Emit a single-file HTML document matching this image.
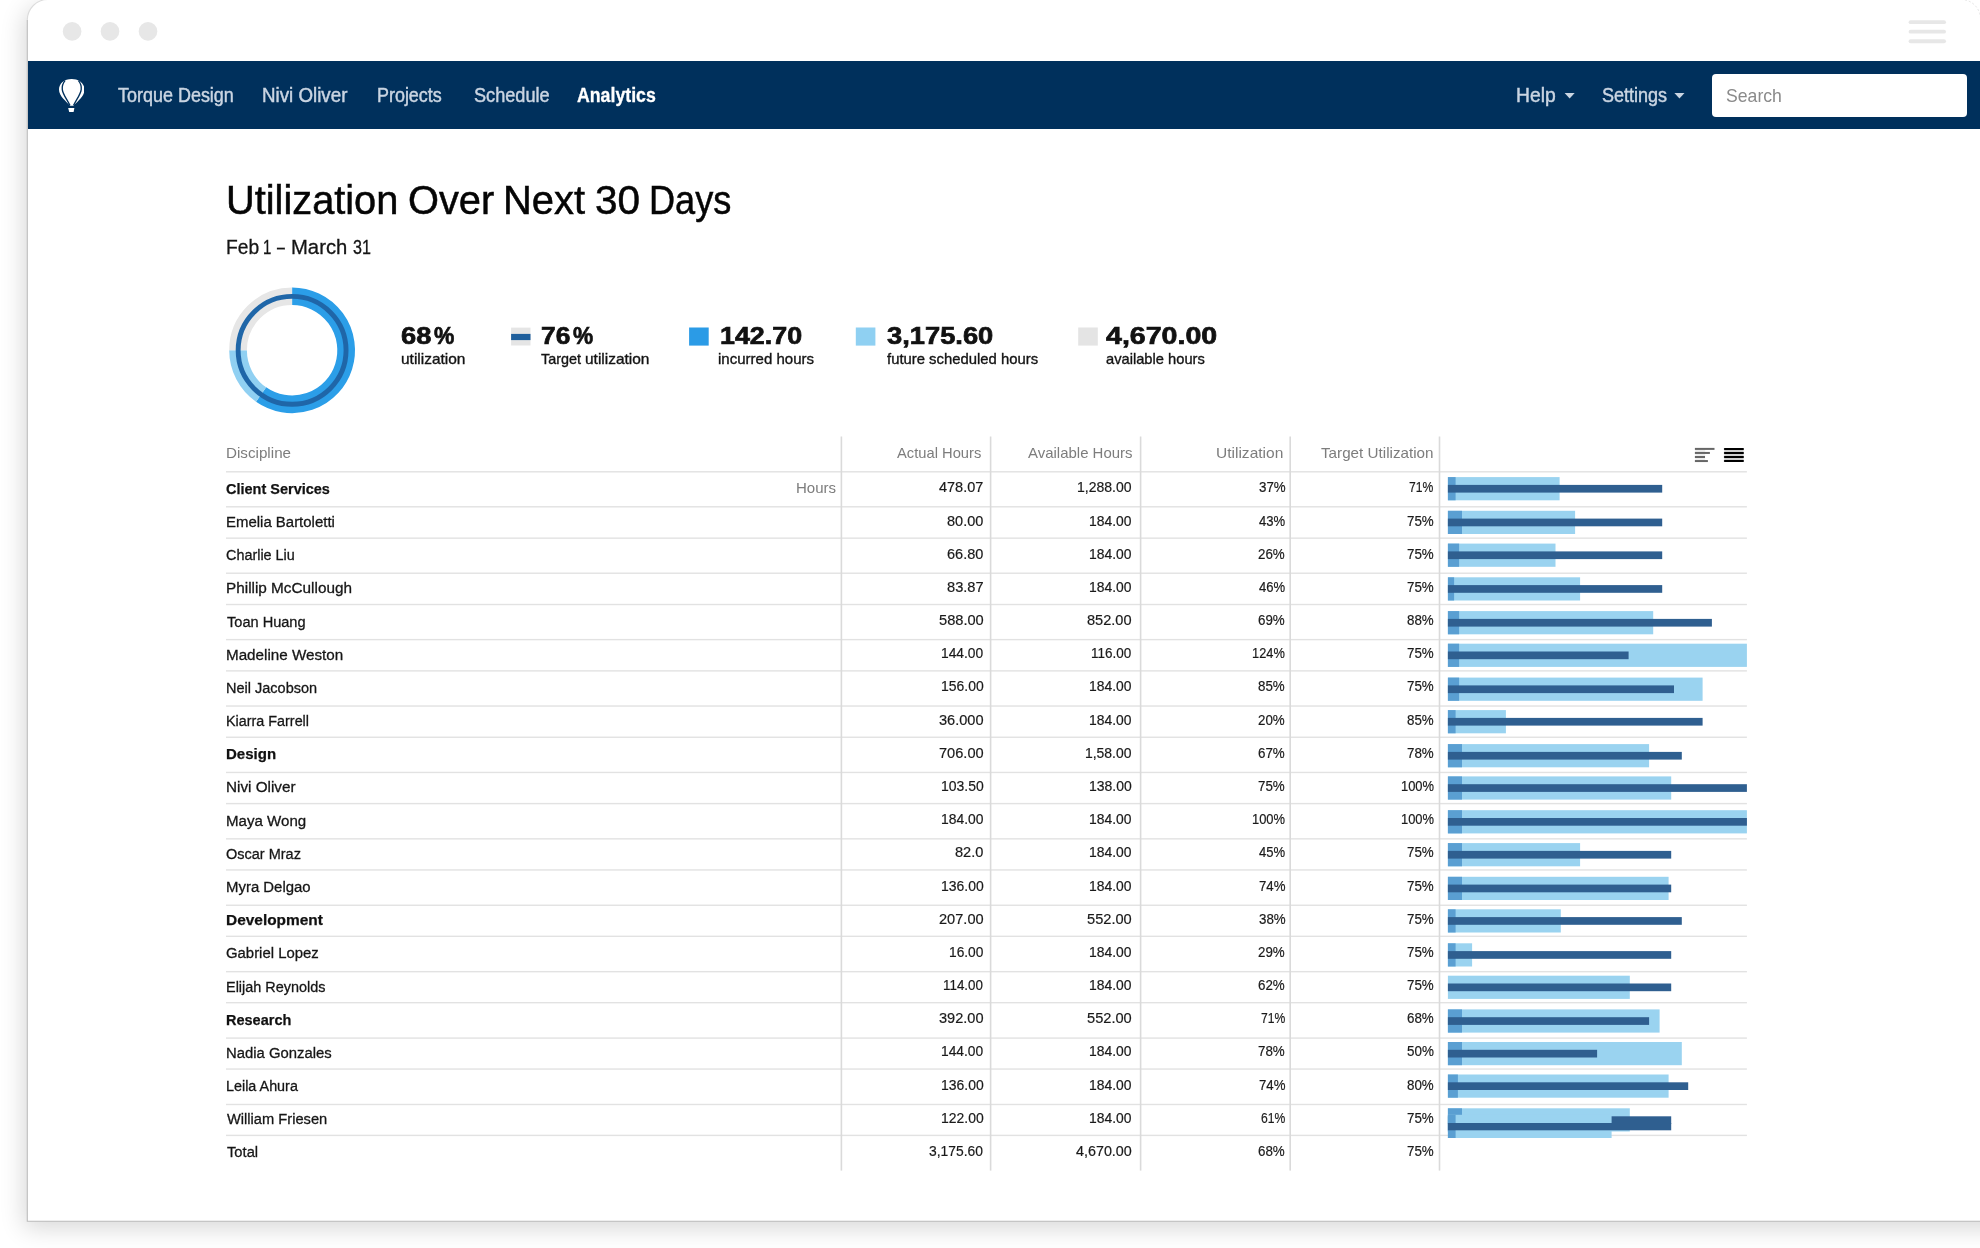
<!DOCTYPE html>
<html><head><meta charset="utf-8"><title>Utilization</title>
<style>
html,body{margin:0;padding:0}
body{width:1980px;height:1248px;position:relative;overflow:hidden;background:#fff;font-family:"Liberation Sans", sans-serif}
.b{position:absolute;display:block}
.t{position:absolute;white-space:nowrap;line-height:1;transform-origin:0 0;display:block}
#win{position:absolute;left:26.8px;top:-1px;width:1990px;height:1222.3px;border-radius:21px 0 0 0;background:#fff;box-shadow:-3px 7px 24px rgba(0,0,0,.16);overflow:hidden}
#txt{position:absolute;left:0;top:0;width:1980px;height:1248px;will-change:transform}
#nav{position:absolute;left:1px;top:62.2px;width:100%;height:67.6px;background:#00305c}
#search{position:absolute;left:1711.8px;top:73.6px;width:255.2px;height:43.5px;background:#fff;border-radius:4px}
</style></head>
<body>
<div id="win"><div id="nav"></div></div>
<div id="search"></div>
<svg class="b" style="left:58.6px;top:79px" width="25.5" height="33" viewBox="0 0 25.5 33">
<path d="M12.75 0C5.2 0 0 4.6 0 10.6C0 17.4 7.2 22.3 11 26.7L14.5 26.7C18.3 22.3 25.5 17.4 25.5 10.6C25.5 4.6 20.3 0 12.75 0Z" fill="#fff"/>
<path d="M6 1.6C3.6 4.6 2.9 7.6 3.3 10.6C3.9 15.6 8.2 20.6 10.9 26.4" fill="none" stroke="#00305c" stroke-width="1.35"/>
<path d="M19.5 1.6C21.9 4.6 22.6 7.6 22.2 10.6C21.6 15.6 17.3 20.6 14.6 26.4" fill="none" stroke="#00305c" stroke-width="1.35"/>
<path d="M9.2 29.1H15.4L14.6 32.9H10.2Z" fill="#fff"/>
</svg>
<svg class="b" style="left:0;top:0" width="1980" height="1248" viewBox="0 0 1980 1248">
<g fill="none" stroke-width="17.70">
<path d="M292.10 296.25A54.05 54.05 0 1 1 261.10 394.58" stroke="#2b9ee8"/>
<path d="M261.10 394.58A54.05 54.05 0 0 1 238.05 350.30" stroke="#90d0f2"/>
<path d="M238.05 350.30A54.05 54.05 0 0 1 292.10 296.25" stroke="#e6e6e6"/>
</g>
<circle cx="292.1" cy="350.3" r="53.95" fill="none" stroke="#1f66a8" stroke-width="4.9"/>
<path d="M27.3 20V1221.3H1981" fill="none" stroke="#bcbcbc" stroke-width="1.1"/>
<path d="M27.3 20A20.5 20.5 0 0 1 47.8 -0.5" fill="none" stroke="#dcdcdc" stroke-width="1.1"/>
<path d="M1961 -0.5A19.5 19.5 0 0 1 1980.5 19" fill="none" stroke="#e4e4e4" stroke-width="1" stroke-dasharray="2 2"/>
<rect x="226.00" y="471.10" width="1520.90" height="1.40" fill="#e2e2e2"/>
<rect x="226.00" y="506.10" width="1520.90" height="1.40" fill="#e2e2e2"/>
<rect x="226.00" y="537.46" width="1520.90" height="1.40" fill="#e2e2e2"/>
<rect x="226.00" y="572.51" width="1520.90" height="1.40" fill="#e2e2e2"/>
<rect x="226.00" y="603.82" width="1520.90" height="1.40" fill="#e2e2e2"/>
<rect x="226.00" y="638.92" width="1520.90" height="1.40" fill="#e2e2e2"/>
<rect x="226.00" y="670.18" width="1520.90" height="1.40" fill="#e2e2e2"/>
<rect x="226.00" y="705.33" width="1520.90" height="1.40" fill="#e2e2e2"/>
<rect x="226.00" y="736.54" width="1520.90" height="1.40" fill="#e2e2e2"/>
<rect x="226.00" y="771.74" width="1520.90" height="1.40" fill="#e2e2e2"/>
<rect x="226.00" y="802.90" width="1520.90" height="1.40" fill="#e2e2e2"/>
<rect x="226.00" y="838.15" width="1520.90" height="1.40" fill="#e2e2e2"/>
<rect x="226.00" y="869.26" width="1520.90" height="1.40" fill="#e2e2e2"/>
<rect x="226.00" y="904.56" width="1520.90" height="1.40" fill="#e2e2e2"/>
<rect x="226.00" y="935.62" width="1520.90" height="1.40" fill="#e2e2e2"/>
<rect x="226.00" y="970.97" width="1520.90" height="1.40" fill="#e2e2e2"/>
<rect x="226.00" y="1001.98" width="1520.90" height="1.40" fill="#e2e2e2"/>
<rect x="226.00" y="1037.38" width="1520.90" height="1.40" fill="#e2e2e2"/>
<rect x="226.00" y="1068.34" width="1520.90" height="1.40" fill="#e2e2e2"/>
<rect x="226.00" y="1103.79" width="1520.90" height="1.40" fill="#e2e2e2"/>
<rect x="226.00" y="1134.70" width="1520.90" height="1.40" fill="#e2e2e2"/>
<rect x="840.60" y="436.50" width="1.60" height="734.10" fill="#dadada"/>
<rect x="989.80" y="436.50" width="1.60" height="734.10" fill="#dadada"/>
<rect x="1139.80" y="436.50" width="1.60" height="734.10" fill="#dadada"/>
<rect x="1289.40" y="436.50" width="1.60" height="734.10" fill="#dadada"/>
<rect x="1438.70" y="436.50" width="1.60" height="734.10" fill="#dadada"/>
<rect x="1447.90" y="477.10" width="111.70" height="23.20" fill="#9ad3f0"/>
<rect x="1447.90" y="477.10" width="7.70" height="23.20" fill="#5a9fd2"/>
<rect x="1447.90" y="484.90" width="214.30" height="7.70" fill="#2f5f90"/>
<rect x="1447.90" y="510.80" width="127.20" height="23.20" fill="#9ad3f0"/>
<rect x="1447.90" y="510.80" width="14.10" height="23.20" fill="#5a9fd2"/>
<rect x="1447.90" y="518.60" width="214.30" height="7.70" fill="#2f5f90"/>
<rect x="1447.90" y="543.60" width="107.60" height="23.20" fill="#9ad3f0"/>
<rect x="1447.90" y="543.60" width="11.20" height="23.20" fill="#5a9fd2"/>
<rect x="1447.90" y="551.40" width="214.30" height="7.70" fill="#2f5f90"/>
<rect x="1447.90" y="577.30" width="132.20" height="23.20" fill="#9ad3f0"/>
<rect x="1447.90" y="577.30" width="6.20" height="23.20" fill="#5a9fd2"/>
<rect x="1447.90" y="585.10" width="214.30" height="7.70" fill="#2f5f90"/>
<rect x="1447.90" y="611.10" width="205.30" height="23.20" fill="#9ad3f0"/>
<rect x="1447.90" y="611.10" width="11.20" height="23.20" fill="#5a9fd2"/>
<rect x="1447.90" y="618.90" width="264.00" height="7.70" fill="#2f5f90"/>
<rect x="1447.90" y="643.70" width="299.00" height="23.20" fill="#9ad3f0"/>
<rect x="1447.90" y="643.70" width="11.20" height="23.20" fill="#5a9fd2"/>
<rect x="1447.90" y="651.50" width="180.70" height="7.70" fill="#2f5f90"/>
<rect x="1447.90" y="677.60" width="254.70" height="23.20" fill="#9ad3f0"/>
<rect x="1447.90" y="677.60" width="11.20" height="23.20" fill="#5a9fd2"/>
<rect x="1447.90" y="685.40" width="226.10" height="7.70" fill="#2f5f90"/>
<rect x="1447.90" y="710.10" width="58.00" height="23.20" fill="#9ad3f0"/>
<rect x="1447.90" y="710.10" width="7.70" height="23.20" fill="#5a9fd2"/>
<rect x="1447.90" y="717.90" width="254.70" height="7.70" fill="#2f5f90"/>
<rect x="1447.90" y="744.10" width="201.20" height="23.20" fill="#9ad3f0"/>
<rect x="1447.90" y="744.10" width="14.10" height="23.20" fill="#5a9fd2"/>
<rect x="1447.90" y="751.90" width="233.90" height="7.70" fill="#2f5f90"/>
<rect x="1447.90" y="776.40" width="223.30" height="23.20" fill="#9ad3f0"/>
<rect x="1447.90" y="776.40" width="14.10" height="23.20" fill="#5a9fd2"/>
<rect x="1447.90" y="784.20" width="299.00" height="7.70" fill="#2f5f90"/>
<rect x="1447.90" y="810.20" width="299.00" height="23.20" fill="#9ad3f0"/>
<rect x="1447.90" y="810.20" width="14.10" height="23.20" fill="#5a9fd2"/>
<rect x="1447.90" y="818.00" width="299.00" height="7.70" fill="#2f5f90"/>
<rect x="1447.90" y="843.10" width="132.20" height="23.20" fill="#9ad3f0"/>
<rect x="1447.90" y="843.10" width="14.10" height="23.20" fill="#5a9fd2"/>
<rect x="1447.90" y="850.90" width="223.30" height="7.70" fill="#2f5f90"/>
<rect x="1447.90" y="876.80" width="220.70" height="23.20" fill="#9ad3f0"/>
<rect x="1447.90" y="876.80" width="14.10" height="23.20" fill="#5a9fd2"/>
<rect x="1447.90" y="884.60" width="223.30" height="7.70" fill="#2f5f90"/>
<rect x="1447.90" y="909.30" width="112.90" height="23.20" fill="#9ad3f0"/>
<rect x="1447.90" y="909.30" width="7.70" height="23.20" fill="#5a9fd2"/>
<rect x="1447.90" y="917.10" width="233.90" height="7.70" fill="#2f5f90"/>
<rect x="1447.90" y="943.30" width="24.20" height="23.20" fill="#9ad3f0"/>
<rect x="1447.90" y="943.30" width="7.70" height="23.20" fill="#5a9fd2"/>
<rect x="1447.90" y="951.10" width="223.30" height="7.70" fill="#2f5f90"/>
<rect x="1447.90" y="975.70" width="181.90" height="23.20" fill="#9ad3f0"/>
<rect x="1447.90" y="983.50" width="223.30" height="7.70" fill="#2f5f90"/>
<rect x="1447.90" y="1009.40" width="211.70" height="23.20" fill="#9ad3f0"/>
<rect x="1447.90" y="1009.40" width="14.10" height="23.20" fill="#5a9fd2"/>
<rect x="1447.90" y="1017.20" width="201.20" height="7.70" fill="#2f5f90"/>
<rect x="1447.90" y="1042.00" width="233.90" height="23.20" fill="#9ad3f0"/>
<rect x="1447.90" y="1042.00" width="14.10" height="23.20" fill="#5a9fd2"/>
<rect x="1447.90" y="1049.80" width="149.20" height="7.70" fill="#2f5f90"/>
<rect x="1447.90" y="1074.50" width="220.70" height="23.20" fill="#9ad3f0"/>
<rect x="1447.90" y="1074.50" width="10.00" height="23.20" fill="#5a9fd2"/>
<rect x="1447.90" y="1082.30" width="240.30" height="7.70" fill="#2f5f90"/>
<rect x="1447.90" y="1108.30" width="181.90" height="23.20" fill="#9ad3f0"/>
<rect x="1447.90" y="1108.30" width="14.10" height="23.20" fill="#5a9fd2"/>
<rect x="1447.90" y="1116.30" width="223.30" height="7.70" fill="#2f5f90"/>
<rect x="1447.90" y="1114.80" width="163.70" height="23.20" fill="#9ad3f0"/>
<rect x="1447.90" y="1114.80" width="7.70" height="23.20" fill="#5a9fd2"/>
<rect x="1447.90" y="1123.00" width="223.30" height="7.30" fill="#2f5f90"/>
<rect x="511.10" y="327.60" width="19.40" height="17.90" fill="#e5e5e5"/>
<rect x="511.10" y="333.90" width="19.40" height="6.20" fill="#1f5f9c"/>
<rect x="689.10" y="327.50" width="19.60" height="18.10" fill="#2b9be6"/>
<rect x="855.80" y="327.50" width="19.60" height="18.10" fill="#8fd0f2"/>
<rect x="1078.20" y="327.50" width="19.60" height="18.10" fill="#e4e4e4"/>
<rect x="1695.20" y="449.00" width="10.00" height="12.00" fill="#eeeeee"/>
<rect x="1694.90" y="447.90" width="19.60" height="2.00" fill="#666"/>
<rect x="1694.90" y="451.95" width="15.00" height="2.00" fill="#666"/>
<rect x="1694.90" y="456.00" width="10.10" height="2.00" fill="#666"/>
<rect x="1694.90" y="460.05" width="13.00" height="2.00" fill="#666"/>
<rect x="1724.20" y="449.00" width="19.40" height="12.00" fill="#cfcfcf"/>
<rect x="1723.80" y="447.90" width="20.20" height="2.00" fill="#000" rx="1"/>
<rect x="1723.80" y="451.95" width="20.20" height="2.00" fill="#000" rx="1"/>
<rect x="1723.80" y="456.00" width="20.20" height="2.00" fill="#000" rx="1"/>
<rect x="1723.80" y="460.05" width="20.20" height="2.00" fill="#000" rx="1"/>
<rect x="1908.60" y="20.20" width="37.40" height="3.90" fill="#e7e7e7" rx="2"/>
<rect x="1908.60" y="29.70" width="37.40" height="3.90" fill="#e7e7e7" rx="2"/>
<rect x="1908.60" y="39.30" width="37.40" height="3.90" fill="#e7e7e7" rx="2"/>
<rect x="62.80" y="22.10" width="18.60" height="18.60" fill="#e7e7e7" rx="9.30"/>
<rect x="100.70" y="22.10" width="18.60" height="18.60" fill="#e7e7e7" rx="9.30"/>
<rect x="138.70" y="22.10" width="18.60" height="18.60" fill="#e7e7e7" rx="9.30"/>
<path d="M1564.6 92.9H1574.7L1569.65 98.5Z" fill="#cad5e2"/>
<path d="M1674.4 92.9H1684.5L1679.45 98.5Z" fill="#cad5e2"/>
</svg>
<div id="txt">
<span class="t" style="left:117.81px;top:85.81px;font-size:19.6px;color:#cad5e2;transform:scaleX(0.9168);-webkit-text-stroke:0.45px #cad5e2">Torque Design</span>
<span class="t" style="left:261.81px;top:85.81px;font-size:19.6px;color:#cad5e2;transform:scaleX(0.9566);-webkit-text-stroke:0.45px #cad5e2">Nivi Oliver</span>
<span class="t" style="left:377.07px;top:85.81px;font-size:19.6px;color:#cad5e2;transform:scaleX(0.9146);-webkit-text-stroke:0.45px #cad5e2">Projects</span>
<span class="t" style="left:473.91px;top:85.81px;font-size:19.6px;color:#cad5e2;transform:scaleX(0.9253);-webkit-text-stroke:0.45px #cad5e2">Schedule</span>
<span class="t" style="left:577.29px;top:85.81px;font-size:19.6px;color:#ffffff;transform:scaleX(0.9045);font-weight:700;-webkit-text-stroke:0.3px #ffffff">Analytics</span>
<span class="t" style="left:1515.67px;top:85.81px;font-size:19.6px;color:#cad5e2;transform:scaleX(0.9846);-webkit-text-stroke:0.45px #cad5e2">Help</span>
<span class="t" style="left:1601.72px;top:85.81px;font-size:19.6px;color:#cad5e2;transform:scaleX(0.9195);-webkit-text-stroke:0.45px #cad5e2">Settings</span>
<span class="t" style="left:1725.51px;top:86.54px;font-size:18.5px;color:#8a8a8a;transform:scaleX(0.9532)">Search</span>
<span class="t" style="left:225.91px;top:180.14px;font-size:40px;color:#050505;transform:scaleX(0.9939);-webkit-text-stroke:0.5px #050505">Utilization</span>
<span class="t" style="left:407.61px;top:180.14px;font-size:40px;color:#050505;transform:scaleX(0.9948);-webkit-text-stroke:0.5px #050505">Over</span>
<span class="t" style="left:502.51px;top:180.14px;font-size:40px;color:#050505;transform:scaleX(0.9973);-webkit-text-stroke:0.5px #050505">Next</span>
<span class="t" style="left:595.46px;top:180.14px;font-size:40px;color:#050505;transform:scaleX(1.0134);-webkit-text-stroke:0.5px #050505">30</span>
<span class="t" style="left:649.40px;top:180.14px;font-size:40px;color:#050505;transform:scaleX(0.9038);-webkit-text-stroke:0.5px #050505">Days</span>
<span class="t" style="left:226.12px;top:237.15px;font-size:20.5px;color:#141414;transform:scaleX(0.9371);-webkit-text-stroke:0.3px #141414">Feb</span>
<span class="t" style="left:263.40px;top:237.15px;font-size:20.5px;color:#141414;transform:scaleX(0.7287);-webkit-text-stroke:0.3px #141414">1</span>
<span class="t" style="left:276.89px;top:237.15px;font-size:20.5px;color:#141414;transform:scaleX(0.6881);-webkit-text-stroke:0.3px #141414">–</span>
<span class="t" style="left:290.55px;top:237.15px;font-size:20.5px;color:#141414;transform:scaleX(0.9879);-webkit-text-stroke:0.3px #141414">March</span>
<span class="t" style="left:352.51px;top:237.15px;font-size:20.5px;color:#141414;transform:scaleX(0.7852);-webkit-text-stroke:0.3px #141414">31</span>
<span class="t" style="left:401.11px;top:323.61px;font-size:24.2px;color:#111;transform:scaleX(1.1280);font-weight:700;-webkit-text-stroke:0.7px #111">68</span>
<span class="t" style="left:433.85px;top:323.61px;font-size:24.2px;color:#111;transform:scaleX(0.9457);font-weight:700;-webkit-text-stroke:0.7px #111">%</span>
<span class="t" style="left:400.56px;top:350.70px;font-size:15px;color:#141414;transform:scaleX(1.0301);-webkit-text-stroke:0.35px #141414">utilization</span>
<span class="t" style="left:540.70px;top:323.61px;font-size:24.2px;color:#111;transform:scaleX(1.0894);font-weight:700;-webkit-text-stroke:0.7px #111">76</span>
<span class="t" style="left:572.66px;top:323.61px;font-size:24.2px;color:#111;transform:scaleX(0.9362);font-weight:700;-webkit-text-stroke:0.7px #111">%</span>
<span class="t" style="left:540.83px;top:350.70px;font-size:15px;color:#141414;transform:scaleX(0.9597);-webkit-text-stroke:0.35px #141414">Target</span>
<span class="t" style="left:585.46px;top:350.70px;font-size:15px;color:#141414;transform:scaleX(1.0301);-webkit-text-stroke:0.35px #141414">utilization</span>
<span class="t" style="left:719.68px;top:323.61px;font-size:24.2px;color:#111;transform:scaleX(1.1098);font-weight:700;-webkit-text-stroke:0.7px #111">142.70</span>
<span class="t" style="left:717.69px;top:350.70px;font-size:15px;color:#141414;transform:scaleX(1.0011);-webkit-text-stroke:0.35px #141414">incurred hours</span>
<span class="t" style="left:887.43px;top:323.61px;font-size:24.2px;color:#111;transform:scaleX(1.1290);font-weight:700;-webkit-text-stroke:0.7px #111">3,175.60</span>
<span class="t" style="left:886.74px;top:350.70px;font-size:15px;color:#141414;transform:scaleX(0.9906);-webkit-text-stroke:0.35px #141414">future scheduled hours</span>
<span class="t" style="left:1106.09px;top:323.61px;font-size:24.2px;color:#111;transform:scaleX(1.1806);font-weight:700;-webkit-text-stroke:0.7px #111">4,670.00</span>
<span class="t" style="left:1105.71px;top:350.70px;font-size:15px;color:#141414;transform:scaleX(0.9790);-webkit-text-stroke:0.35px #141414">available hours</span>
<span class="t" style="left:226.15px;top:444.80px;font-size:15px;color:#7d7d7d;transform:scaleX(1.0131)">Discipline</span>
<span class="t" style="left:896.75px;top:444.80px;font-size:15px;color:#7d7d7d;transform:scaleX(0.9817)">Actual Hours</span>
<span class="t" style="left:1027.54px;top:444.80px;font-size:15px;color:#7d7d7d;transform:scaleX(0.9975)">Available Hours</span>
<span class="t" style="left:1215.67px;top:444.80px;font-size:15px;color:#7d7d7d;transform:scaleX(1.0351)">Utilization</span>
<span class="t" style="left:1321.46px;top:444.80px;font-size:15px;color:#7d7d7d;transform:scaleX(1.0148)">Target Utilization</span>
<span class="t" style="left:796.26px;top:479.50px;font-size:15px;color:#7d7d7d;transform:scaleX(1.0024)">Hours</span>
<span class="t" style="left:226.31px;top:480.78px;font-size:15.5px;color:#111;transform:scaleX(0.9350);font-weight:700;-webkit-text-stroke:0.25px #111">Client Services</span>
<span class="t" style="left:939.45px;top:480.34px;font-size:14.6px;color:#1a1a1a;transform:scaleX(0.9930);-webkit-text-stroke:0.2px #1a1a1a">478.07</span>
<span class="t" style="left:1077.19px;top:480.34px;font-size:14.6px;color:#1a1a1a;transform:scaleX(0.9595);-webkit-text-stroke:0.2px #1a1a1a">1,288.00</span>
<span class="t" style="left:1258.50px;top:480.34px;font-size:14.6px;color:#1a1a1a;transform:scaleX(0.9134);-webkit-text-stroke:0.2px #1a1a1a">37%</span>
<span class="t" style="left:1409.23px;top:480.34px;font-size:14.6px;color:#1a1a1a;transform:scaleX(0.8323);-webkit-text-stroke:0.2px #1a1a1a">71%</span>
<span class="t" style="left:225.70px;top:513.96px;font-size:15.5px;color:#161616;transform:scaleX(0.9646);-webkit-text-stroke:0.3px #161616">Emelia Bartoletti</span>
<span class="t" style="left:947.04px;top:513.53px;font-size:14.6px;color:#1a1a1a;transform:scaleX(0.9937);-webkit-text-stroke:0.2px #1a1a1a">80.00</span>
<span class="t" style="left:1089.30px;top:513.53px;font-size:14.6px;color:#1a1a1a;transform:scaleX(0.9506);-webkit-text-stroke:0.2px #1a1a1a">184.00</span>
<span class="t" style="left:1259.03px;top:513.53px;font-size:14.6px;color:#1a1a1a;transform:scaleX(0.8951);-webkit-text-stroke:0.2px #1a1a1a">43%</span>
<span class="t" style="left:1406.83px;top:513.53px;font-size:14.6px;color:#1a1a1a;transform:scaleX(0.9157);-webkit-text-stroke:0.2px #1a1a1a">75%</span>
<span class="t" style="left:226.23px;top:547.15px;font-size:15.5px;color:#161616;transform:scaleX(0.9286);-webkit-text-stroke:0.3px #161616">Charlie Liu</span>
<span class="t" style="left:946.98px;top:546.71px;font-size:14.6px;color:#1a1a1a;transform:scaleX(0.9953);-webkit-text-stroke:0.2px #1a1a1a">66.80</span>
<span class="t" style="left:1089.30px;top:546.71px;font-size:14.6px;color:#1a1a1a;transform:scaleX(0.9506);-webkit-text-stroke:0.2px #1a1a1a">184.00</span>
<span class="t" style="left:1258.44px;top:546.71px;font-size:14.6px;color:#1a1a1a;transform:scaleX(0.9154);-webkit-text-stroke:0.2px #1a1a1a">26%</span>
<span class="t" style="left:1406.83px;top:546.71px;font-size:14.6px;color:#1a1a1a;transform:scaleX(0.9157);-webkit-text-stroke:0.2px #1a1a1a">75%</span>
<span class="t" style="left:225.67px;top:580.33px;font-size:15.5px;color:#161616;transform:scaleX(0.9880);-webkit-text-stroke:0.3px #161616">Phillip McCullough</span>
<span class="t" style="left:947.03px;top:579.90px;font-size:14.6px;color:#1a1a1a;transform:scaleX(1.0031);-webkit-text-stroke:0.2px #1a1a1a">83.87</span>
<span class="t" style="left:1089.30px;top:579.90px;font-size:14.6px;color:#1a1a1a;transform:scaleX(0.9506);-webkit-text-stroke:0.2px #1a1a1a">184.00</span>
<span class="t" style="left:1259.03px;top:579.90px;font-size:14.6px;color:#1a1a1a;transform:scaleX(0.8951);-webkit-text-stroke:0.2px #1a1a1a">46%</span>
<span class="t" style="left:1406.83px;top:579.90px;font-size:14.6px;color:#1a1a1a;transform:scaleX(0.9157);-webkit-text-stroke:0.2px #1a1a1a">75%</span>
<span class="t" style="left:226.62px;top:613.52px;font-size:15.5px;color:#161616;transform:scaleX(0.9400);-webkit-text-stroke:0.3px #161616">Toan Huang</span>
<span class="t" style="left:938.73px;top:613.08px;font-size:14.6px;color:#1a1a1a;transform:scaleX(1.0018);-webkit-text-stroke:0.2px #1a1a1a">588.00</span>
<span class="t" style="left:1087.18px;top:613.08px;font-size:14.6px;color:#1a1a1a;transform:scaleX(0.9983);-webkit-text-stroke:0.2px #1a1a1a">852.00</span>
<span class="t" style="left:1258.43px;top:613.08px;font-size:14.6px;color:#1a1a1a;transform:scaleX(0.9157);-webkit-text-stroke:0.2px #1a1a1a">69%</span>
<span class="t" style="left:1406.88px;top:613.08px;font-size:14.6px;color:#1a1a1a;transform:scaleX(0.9139);-webkit-text-stroke:0.2px #1a1a1a">88%</span>
<span class="t" style="left:225.68px;top:646.70px;font-size:15.5px;color:#161616;transform:scaleX(0.9810);-webkit-text-stroke:0.3px #161616">Madeline Weston</span>
<span class="t" style="left:941.25px;top:646.27px;font-size:14.6px;color:#1a1a1a;transform:scaleX(0.9448);-webkit-text-stroke:0.2px #1a1a1a">144.00</span>
<span class="t" style="left:1091.43px;top:646.27px;font-size:14.6px;color:#1a1a1a;transform:scaleX(0.9234);-webkit-text-stroke:0.2px #1a1a1a">116.00</span>
<span class="t" style="left:1252.48px;top:646.27px;font-size:14.6px;color:#1a1a1a;transform:scaleX(0.8784);-webkit-text-stroke:0.2px #1a1a1a">124%</span>
<span class="t" style="left:1406.83px;top:646.27px;font-size:14.6px;color:#1a1a1a;transform:scaleX(0.9157);-webkit-text-stroke:0.2px #1a1a1a">75%</span>
<span class="t" style="left:225.73px;top:679.89px;font-size:15.5px;color:#161616;transform:scaleX(0.9359);-webkit-text-stroke:0.3px #161616">Neil Jacobson</span>
<span class="t" style="left:940.74px;top:679.45px;font-size:14.6px;color:#1a1a1a;transform:scaleX(0.9564);-webkit-text-stroke:0.2px #1a1a1a">156.00</span>
<span class="t" style="left:1089.30px;top:679.45px;font-size:14.6px;color:#1a1a1a;transform:scaleX(0.9506);-webkit-text-stroke:0.2px #1a1a1a">184.00</span>
<span class="t" style="left:1258.48px;top:679.45px;font-size:14.6px;color:#1a1a1a;transform:scaleX(0.9139);-webkit-text-stroke:0.2px #1a1a1a">85%</span>
<span class="t" style="left:1406.83px;top:679.45px;font-size:14.6px;color:#1a1a1a;transform:scaleX(0.9157);-webkit-text-stroke:0.2px #1a1a1a">75%</span>
<span class="t" style="left:225.74px;top:713.07px;font-size:15.5px;color:#161616;transform:scaleX(0.9267);-webkit-text-stroke:0.3px #161616">Kiarra Farrell</span>
<span class="t" style="left:938.90px;top:712.64px;font-size:14.6px;color:#1a1a1a;transform:scaleX(0.9979);-webkit-text-stroke:0.2px #1a1a1a">36.000</span>
<span class="t" style="left:1089.30px;top:712.64px;font-size:14.6px;color:#1a1a1a;transform:scaleX(0.9506);-webkit-text-stroke:0.2px #1a1a1a">184.00</span>
<span class="t" style="left:1258.44px;top:712.64px;font-size:14.6px;color:#1a1a1a;transform:scaleX(0.9154);-webkit-text-stroke:0.2px #1a1a1a">20%</span>
<span class="t" style="left:1406.88px;top:712.64px;font-size:14.6px;color:#1a1a1a;transform:scaleX(0.9139);-webkit-text-stroke:0.2px #1a1a1a">85%</span>
<span class="t" style="left:225.81px;top:746.26px;font-size:15.5px;color:#111;transform:scaleX(0.9685);font-weight:700;-webkit-text-stroke:0.25px #111">Design</span>
<span class="t" style="left:938.83px;top:745.82px;font-size:14.6px;color:#1a1a1a;transform:scaleX(0.9996);-webkit-text-stroke:0.2px #1a1a1a">706.00</span>
<span class="t" style="left:1085.34px;top:745.82px;font-size:14.6px;color:#1a1a1a;transform:scaleX(0.9537);-webkit-text-stroke:0.2px #1a1a1a">1,58.00</span>
<span class="t" style="left:1258.43px;top:745.82px;font-size:14.6px;color:#1a1a1a;transform:scaleX(0.9157);-webkit-text-stroke:0.2px #1a1a1a">67%</span>
<span class="t" style="left:1406.83px;top:745.82px;font-size:14.6px;color:#1a1a1a;transform:scaleX(0.9157);-webkit-text-stroke:0.2px #1a1a1a">78%</span>
<span class="t" style="left:225.68px;top:779.44px;font-size:15.5px;color:#161616;transform:scaleX(0.9847);-webkit-text-stroke:0.3px #161616">Nivi Oliver</span>
<span class="t" style="left:940.74px;top:779.01px;font-size:14.6px;color:#1a1a1a;transform:scaleX(0.9564);-webkit-text-stroke:0.2px #1a1a1a">103.50</span>
<span class="t" style="left:1089.04px;top:779.01px;font-size:14.6px;color:#1a1a1a;transform:scaleX(0.9564);-webkit-text-stroke:0.2px #1a1a1a">138.00</span>
<span class="t" style="left:1258.43px;top:779.01px;font-size:14.6px;color:#1a1a1a;transform:scaleX(0.9157);-webkit-text-stroke:0.2px #1a1a1a">75%</span>
<span class="t" style="left:1400.62px;top:779.01px;font-size:14.6px;color:#1a1a1a;transform:scaleX(0.8854);-webkit-text-stroke:0.2px #1a1a1a">100%</span>
<span class="t" style="left:225.69px;top:812.63px;font-size:15.5px;color:#161616;transform:scaleX(0.9724);-webkit-text-stroke:0.3px #161616">Maya Wong</span>
<span class="t" style="left:941.00px;top:812.19px;font-size:14.6px;color:#1a1a1a;transform:scaleX(0.9506);-webkit-text-stroke:0.2px #1a1a1a">184.00</span>
<span class="t" style="left:1089.30px;top:812.19px;font-size:14.6px;color:#1a1a1a;transform:scaleX(0.9506);-webkit-text-stroke:0.2px #1a1a1a">184.00</span>
<span class="t" style="left:1252.22px;top:812.19px;font-size:14.6px;color:#1a1a1a;transform:scaleX(0.8854);-webkit-text-stroke:0.2px #1a1a1a">100%</span>
<span class="t" style="left:1400.62px;top:812.19px;font-size:14.6px;color:#1a1a1a;transform:scaleX(0.8854);-webkit-text-stroke:0.2px #1a1a1a">100%</span>
<span class="t" style="left:226.24px;top:845.81px;font-size:15.5px;color:#161616;transform:scaleX(0.9356);-webkit-text-stroke:0.3px #161616">Oscar Mraz</span>
<span class="t" style="left:955.18px;top:845.38px;font-size:14.6px;color:#1a1a1a;transform:scaleX(1.0007);-webkit-text-stroke:0.2px #1a1a1a">82.0</span>
<span class="t" style="left:1089.30px;top:845.38px;font-size:14.6px;color:#1a1a1a;transform:scaleX(0.9506);-webkit-text-stroke:0.2px #1a1a1a">184.00</span>
<span class="t" style="left:1259.03px;top:845.38px;font-size:14.6px;color:#1a1a1a;transform:scaleX(0.8951);-webkit-text-stroke:0.2px #1a1a1a">45%</span>
<span class="t" style="left:1406.83px;top:845.38px;font-size:14.6px;color:#1a1a1a;transform:scaleX(0.9157);-webkit-text-stroke:0.2px #1a1a1a">75%</span>
<span class="t" style="left:225.70px;top:879.00px;font-size:15.5px;color:#161616;transform:scaleX(0.9633);-webkit-text-stroke:0.3px #161616">Myra Delgao</span>
<span class="t" style="left:940.74px;top:878.56px;font-size:14.6px;color:#1a1a1a;transform:scaleX(0.9564);-webkit-text-stroke:0.2px #1a1a1a">136.00</span>
<span class="t" style="left:1089.30px;top:878.56px;font-size:14.6px;color:#1a1a1a;transform:scaleX(0.9506);-webkit-text-stroke:0.2px #1a1a1a">184.00</span>
<span class="t" style="left:1258.69px;top:878.56px;font-size:14.6px;color:#1a1a1a;transform:scaleX(0.9068);-webkit-text-stroke:0.2px #1a1a1a">74%</span>
<span class="t" style="left:1406.83px;top:878.56px;font-size:14.6px;color:#1a1a1a;transform:scaleX(0.9157);-webkit-text-stroke:0.2px #1a1a1a">75%</span>
<span class="t" style="left:225.78px;top:912.18px;font-size:15.5px;color:#111;transform:scaleX(0.9957);font-weight:700;-webkit-text-stroke:0.25px #111">Development</span>
<span class="t" style="left:938.84px;top:911.75px;font-size:14.6px;color:#1a1a1a;transform:scaleX(0.9994);-webkit-text-stroke:0.2px #1a1a1a">207.00</span>
<span class="t" style="left:1087.03px;top:911.75px;font-size:14.6px;color:#1a1a1a;transform:scaleX(1.0018);-webkit-text-stroke:0.2px #1a1a1a">552.00</span>
<span class="t" style="left:1258.50px;top:911.75px;font-size:14.6px;color:#1a1a1a;transform:scaleX(0.9134);-webkit-text-stroke:0.2px #1a1a1a">38%</span>
<span class="t" style="left:1406.83px;top:911.75px;font-size:14.6px;color:#1a1a1a;transform:scaleX(0.9157);-webkit-text-stroke:0.2px #1a1a1a">75%</span>
<span class="t" style="left:226.21px;top:945.37px;font-size:15.5px;color:#161616;transform:scaleX(0.9606);-webkit-text-stroke:0.3px #161616">Gabriel Lopez</span>
<span class="t" style="left:948.91px;top:944.93px;font-size:14.6px;color:#1a1a1a;transform:scaleX(0.9422);-webkit-text-stroke:0.2px #1a1a1a">16.00</span>
<span class="t" style="left:1089.30px;top:944.93px;font-size:14.6px;color:#1a1a1a;transform:scaleX(0.9506);-webkit-text-stroke:0.2px #1a1a1a">184.00</span>
<span class="t" style="left:1258.44px;top:944.93px;font-size:14.6px;color:#1a1a1a;transform:scaleX(0.9154);-webkit-text-stroke:0.2px #1a1a1a">29%</span>
<span class="t" style="left:1406.83px;top:944.93px;font-size:14.6px;color:#1a1a1a;transform:scaleX(0.9157);-webkit-text-stroke:0.2px #1a1a1a">75%</span>
<span class="t" style="left:225.74px;top:978.55px;font-size:15.5px;color:#161616;transform:scaleX(0.9316);-webkit-text-stroke:0.3px #161616">Elijah Reynolds</span>
<span class="t" style="left:943.38px;top:978.12px;font-size:14.6px;color:#1a1a1a;transform:scaleX(0.9174);-webkit-text-stroke:0.2px #1a1a1a">114.00</span>
<span class="t" style="left:1089.30px;top:978.12px;font-size:14.6px;color:#1a1a1a;transform:scaleX(0.9506);-webkit-text-stroke:0.2px #1a1a1a">184.00</span>
<span class="t" style="left:1258.43px;top:978.12px;font-size:14.6px;color:#1a1a1a;transform:scaleX(0.9157);-webkit-text-stroke:0.2px #1a1a1a">62%</span>
<span class="t" style="left:1406.83px;top:978.12px;font-size:14.6px;color:#1a1a1a;transform:scaleX(0.9157);-webkit-text-stroke:0.2px #1a1a1a">75%</span>
<span class="t" style="left:225.84px;top:1011.74px;font-size:15.5px;color:#111;transform:scaleX(0.9356);font-weight:700;-webkit-text-stroke:0.25px #111">Research</span>
<span class="t" style="left:938.90px;top:1011.30px;font-size:14.6px;color:#1a1a1a;transform:scaleX(0.9979);-webkit-text-stroke:0.2px #1a1a1a">392.00</span>
<span class="t" style="left:1087.03px;top:1011.30px;font-size:14.6px;color:#1a1a1a;transform:scaleX(1.0018);-webkit-text-stroke:0.2px #1a1a1a">552.00</span>
<span class="t" style="left:1260.83px;top:1011.30px;font-size:14.6px;color:#1a1a1a;transform:scaleX(0.8323);-webkit-text-stroke:0.2px #1a1a1a">71%</span>
<span class="t" style="left:1406.83px;top:1011.30px;font-size:14.6px;color:#1a1a1a;transform:scaleX(0.9157);-webkit-text-stroke:0.2px #1a1a1a">68%</span>
<span class="t" style="left:225.71px;top:1044.92px;font-size:15.5px;color:#161616;transform:scaleX(0.9578);-webkit-text-stroke:0.3px #161616">Nadia Gonzales</span>
<span class="t" style="left:941.25px;top:1044.49px;font-size:14.6px;color:#1a1a1a;transform:scaleX(0.9448);-webkit-text-stroke:0.2px #1a1a1a">144.00</span>
<span class="t" style="left:1089.30px;top:1044.49px;font-size:14.6px;color:#1a1a1a;transform:scaleX(0.9506);-webkit-text-stroke:0.2px #1a1a1a">184.00</span>
<span class="t" style="left:1258.43px;top:1044.49px;font-size:14.6px;color:#1a1a1a;transform:scaleX(0.9157);-webkit-text-stroke:0.2px #1a1a1a">78%</span>
<span class="t" style="left:1406.74px;top:1044.49px;font-size:14.6px;color:#1a1a1a;transform:scaleX(0.9189);-webkit-text-stroke:0.2px #1a1a1a">50%</span>
<span class="t" style="left:225.74px;top:1078.11px;font-size:15.5px;color:#161616;transform:scaleX(0.9267);-webkit-text-stroke:0.3px #161616">Leila Ahura</span>
<span class="t" style="left:940.74px;top:1077.67px;font-size:14.6px;color:#1a1a1a;transform:scaleX(0.9564);-webkit-text-stroke:0.2px #1a1a1a">136.00</span>
<span class="t" style="left:1089.30px;top:1077.67px;font-size:14.6px;color:#1a1a1a;transform:scaleX(0.9506);-webkit-text-stroke:0.2px #1a1a1a">184.00</span>
<span class="t" style="left:1258.69px;top:1077.67px;font-size:14.6px;color:#1a1a1a;transform:scaleX(0.9068);-webkit-text-stroke:0.2px #1a1a1a">74%</span>
<span class="t" style="left:1406.88px;top:1077.67px;font-size:14.6px;color:#1a1a1a;transform:scaleX(0.9139);-webkit-text-stroke:0.2px #1a1a1a">80%</span>
<span class="t" style="left:226.69px;top:1111.29px;font-size:15.5px;color:#161616;transform:scaleX(0.9461);-webkit-text-stroke:0.3px #161616">William Friesen</span>
<span class="t" style="left:940.74px;top:1110.86px;font-size:14.6px;color:#1a1a1a;transform:scaleX(0.9564);-webkit-text-stroke:0.2px #1a1a1a">122.00</span>
<span class="t" style="left:1089.30px;top:1110.86px;font-size:14.6px;color:#1a1a1a;transform:scaleX(0.9506);-webkit-text-stroke:0.2px #1a1a1a">184.00</span>
<span class="t" style="left:1260.83px;top:1110.86px;font-size:14.6px;color:#1a1a1a;transform:scaleX(0.8323);-webkit-text-stroke:0.2px #1a1a1a">61%</span>
<span class="t" style="left:1406.83px;top:1110.86px;font-size:14.6px;color:#1a1a1a;transform:scaleX(0.9157);-webkit-text-stroke:0.2px #1a1a1a">75%</span>
<span class="t" style="left:226.62px;top:1144.48px;font-size:15.5px;color:#161616;transform:scaleX(0.9500);-webkit-text-stroke:0.3px #161616">Total</span>
<span class="t" style="left:929.43px;top:1144.04px;font-size:14.6px;color:#1a1a1a;transform:scaleX(0.9500);-webkit-text-stroke:0.2px #1a1a1a">3,175.60</span>
<span class="t" style="left:1075.90px;top:1144.04px;font-size:14.6px;color:#1a1a1a;transform:scaleX(0.9823);-webkit-text-stroke:0.2px #1a1a1a">4,670.00</span>
<span class="t" style="left:1258.43px;top:1144.04px;font-size:14.6px;color:#1a1a1a;transform:scaleX(0.9157);-webkit-text-stroke:0.2px #1a1a1a">68%</span>
<span class="t" style="left:1406.83px;top:1144.04px;font-size:14.6px;color:#1a1a1a;transform:scaleX(0.9157);-webkit-text-stroke:0.2px #1a1a1a">75%</span>
</div>
</body></html>
